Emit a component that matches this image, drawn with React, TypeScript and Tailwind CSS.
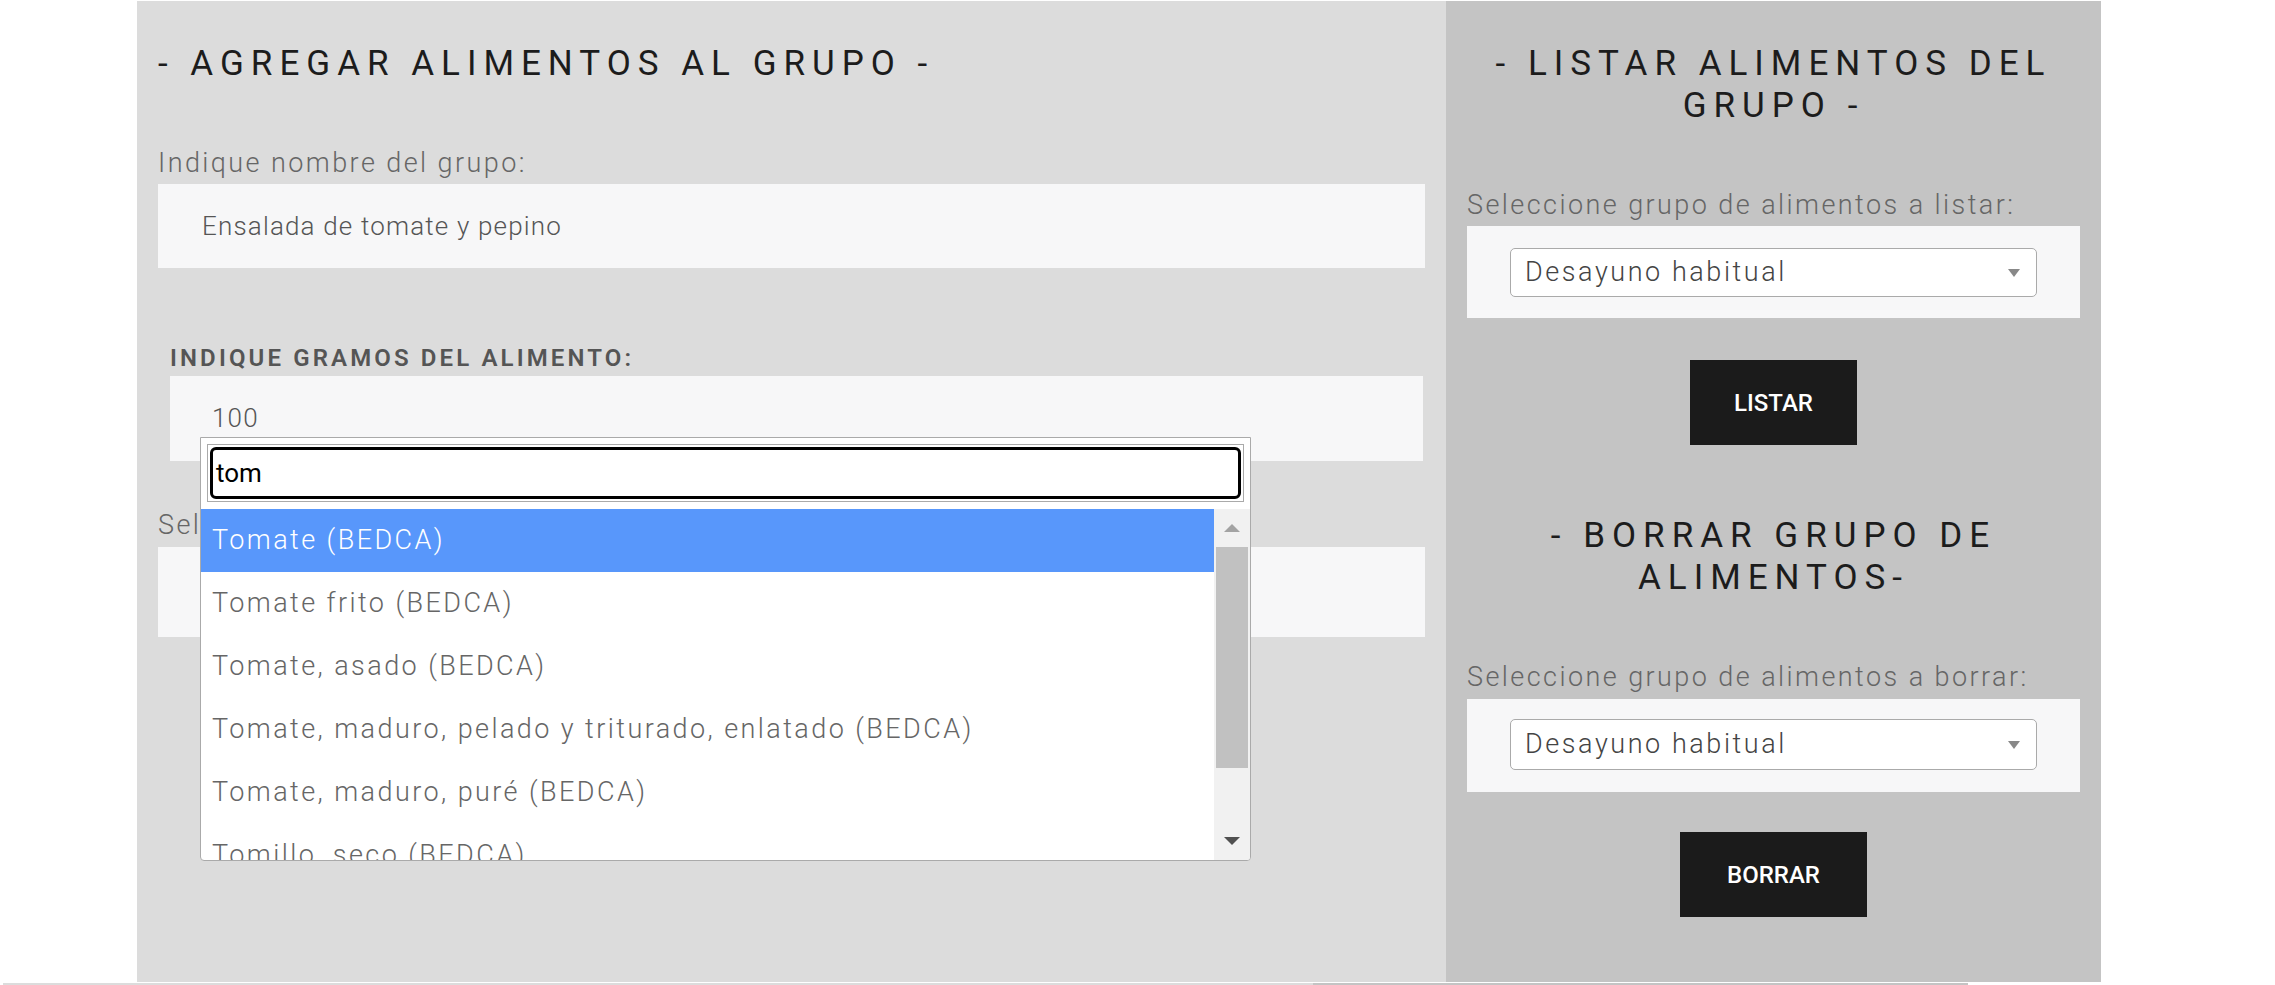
export default function App() {
  const opciones = [
    'Tomate (BEDCA)',
    'Tomate frito (BEDCA)',
    'Tomate, asado (BEDCA)',
    'Tomate, maduro, pelado y triturado, enlatado (BEDCA)',
    'Tomate, maduro, puré (BEDCA)',
    'Tomillo, seco (BEDCA)',
  ]

  return (
    <main className="h-screen overflow-hidden bg-white font-['Roboto','Noto_Sans',sans-serif]">
      <div className="ml-[137px] w-[1964px] pt-px flex">
        {/* Agregar alimentos */}
        <section className="relative w-[1309px] h-[981px] bg-[#dcdcdc] px-[21px] pt-[42px]">
          <h2 className="text-[35px] leading-[42px] tracking-[0.2em] text-[#1c1c1c]">- AGREGAR ALIMENTOS AL GRUPO -</h2>

          <label className="block mt-[60px] text-[27px] leading-[36px] font-light tracking-[0.09em] text-[#666]">Indique nombre del grupo:</label>
          <div className="mt-[3px] h-[84px] bg-[#f7f7f8] flex items-center pl-[44px] text-[26px] font-light tracking-[0.045em] text-[#555]">
            Ensalada de tomate y pepino
          </div>

          <div className="pl-[12px] pr-[2px]">
            <label className="block mt-[72px] text-[24px] leading-[36px] font-semibold uppercase tracking-[0.13em] text-[#555]">Indique gramos del alimento:</label>
            <div className="h-[85px] bg-[#f7f7f8] flex items-center pl-[42px] text-[26px] font-light tracking-[0.045em] text-[#555]">100</div>
          </div>

          <label className="block mt-[46px] text-[27px] leading-[36px] font-light tracking-[0.09em] text-[#666]">Seleccione alimento:</label>
          <div className="mt-[4px] h-[90px] bg-[#f7f7f8]"></div>

          {/* desplegable abierto */}
          <div className="absolute left-[63px] top-[436px] w-[1051px] h-[424px] bg-white border border-[#aaa] rounded-b-[4px] overflow-hidden flex flex-col">
            <div className="px-[6px] pt-[6px] pb-[7px]">
              <div className="h-[58px] border border-[#aaa] p-[2px]">
                <div className="h-full border-[3px] border-black rounded-[6px] flex items-center pl-[3px] text-[26px] text-black">tom</div>
              </div>
            </div>
            <div className="flex flex-1 min-h-0">
              <ul className="flex-1 overflow-hidden">
                {opciones.map((o, i) => (
                  <li
                    key={o}
                    className={
                      i === 0
                        ? 'h-[63px] shrink-0 flex items-center pl-[11px] text-[27px] font-light tracking-[0.09em] bg-[#5897fb] text-white'
                        : 'h-[63px] shrink-0 flex items-center pl-[11px] text-[27px] font-light tracking-[0.09em] text-[#666]'
                    }
                  >
                    {o}
                  </li>
                ))}
              </ul>
              <div className="w-[36px] bg-[#f1f1f1] flex flex-col">
                <div className="h-[38px] flex items-center justify-center">
                  <span className="w-0 h-0 border-l-[8px] border-r-[8px] border-b-[8px] border-l-transparent border-r-transparent border-b-[#a3a3a3]"></span>
                </div>
                <div className="h-[221px] mx-[2px] bg-[#c1c1c1]"></div>
                <div className="flex-1"></div>
                <div className="h-[38px] flex items-center justify-center">
                  <span className="w-0 h-0 border-l-[8px] border-r-[8px] border-t-[8px] border-l-transparent border-r-transparent border-t-[#505050]"></span>
                </div>
              </div>
            </div>
          </div>
        </section>

        {/* Listar / borrar */}
        <section className="w-[655px] h-[981px] bg-[#c4c4c4] px-[21px] pt-[42px]">
          <h2 className="text-center text-[35px] leading-[42px] tracking-[0.2em] text-[#1c1c1c]">- LISTAR ALIMENTOS DEL GRUPO -</h2>

          <label className="block mt-[60px] text-[27px] leading-[36px] font-light tracking-[0.09em] text-[#666]">Seleccione grupo de alimentos a listar:</label>
          <div className="mt-[3px] h-[92px] bg-[#f7f7f8] px-[43px] pt-[22px]">
            <div className="h-[49px] bg-white border border-[#aaa] rounded-[5px] flex items-center justify-between pl-[14px] pr-[16px]">
              <span className="text-[27px] font-light tracking-[0.095em] text-[#444]">Desayuno habitual</span>
              <span className="w-0 h-0 border-l-[6px] border-r-[6px] border-t-[8px] border-l-transparent border-r-transparent border-t-[#888]"></span>
            </div>
          </div>
          <button className="block mx-auto mt-[42px] w-[167px] h-[85px] bg-[#1b1b1b] text-white text-[24px] font-medium">LISTAR</button>

          <h2 className="mt-[70px] text-center text-[35px] leading-[42px] tracking-[0.2em] text-[#1c1c1c]">- BORRAR GRUPO DE ALIMENTOS-</h2>

          <label className="block mt-[60px] text-[27px] leading-[36px] font-light tracking-[0.09em] text-[#666]">Seleccione grupo de alimentos a borrar:</label>
          <div className="mt-[4px] h-[93px] bg-[#f7f7f8] px-[43px] pt-[20px]">
            <div className="h-[51px] bg-white border border-[#aaa] rounded-[5px] flex items-center justify-between pl-[14px] pr-[16px]">
              <span className="text-[27px] font-light tracking-[0.095em] text-[#444]">Desayuno habitual</span>
              <span className="w-0 h-0 border-l-[6px] border-r-[6px] border-t-[8px] border-l-transparent border-r-transparent border-t-[#888]"></span>
            </div>
          </div>
          <button className="block mx-auto mt-[40px] w-[187px] h-[85px] bg-[#1b1b1b] text-white text-[24px] font-medium">BORRAR</button>
        </section>
      </div>

      <div className="mt-px ml-[3px] flex">
        <div className="w-[1310px] h-[3px] bg-[#dcdcdc]"></div>
        <div className="w-[655px] h-[3px] bg-[#c4c4c4]"></div>
      </div>
    </main>
  )
}
